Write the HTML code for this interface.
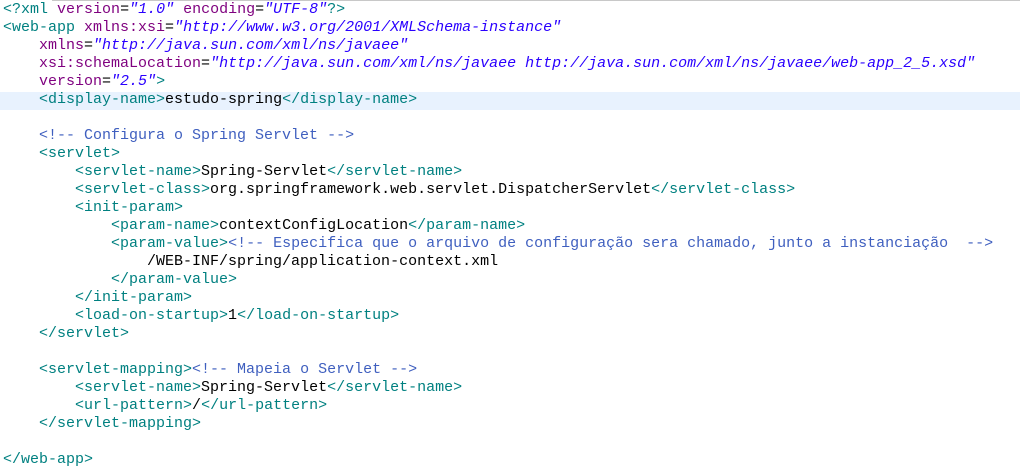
<!DOCTYPE html>
<html><head><meta charset="utf-8"><style>
body{margin:0;width:1020px;height:475px;background:#fff;overflow:hidden;position:relative}
.top{position:absolute;top:0;left:52px;right:0;height:1px;background:#c8c8c8}
.hl{position:absolute;left:0;right:0;top:92px;height:18px;background:#e8f2fe}
pre{position:absolute;top:1px;left:3px;margin:0;font-family:"Liberation Mono",monospace;font-size:15px;line-height:18px;color:#000}
.t{color:#008080}.a{color:#7f007f}.v{color:#2a00ff;font-style:italic}.c{color:#3f5fbf}
</style></head><body><div class="top"></div><div class="hl"></div><pre><span class="t">&lt;?</span><span class="t">xml</span> <span class="a">version</span>=<span class="v">"1.0"</span> <span class="a">encoding</span>=<span class="v">"UTF-8"</span><span class="t">?&gt;</span>
<span class="t">&lt;web-app</span> <span class="a">xmlns:xsi</span>=<span class="v">"http://www.w3.org/2001/XMLSchema-instance"</span>
    <span class="a">xmlns</span>=<span class="v">"http://java.sun.com/xml/ns/javaee"</span>
    <span class="a">xsi:schemaLocation</span>=<span class="v">"http://java.sun.com/xml/ns/javaee http://java.sun.com/xml/ns/javaee/web-app_2_5.xsd"</span>
    <span class="a">version</span>=<span class="v">"2.5"</span><span class="t">&gt;</span>
    <span class="t">&lt;display-name&gt;</span>estudo-spring<span class="t">&lt;/display-name&gt;</span>

    <span class="c">&lt;!-- Configura o Spring Servlet --&gt;</span>
    <span class="t">&lt;servlet&gt;</span>
        <span class="t">&lt;servlet-name&gt;</span>Spring-Servlet<span class="t">&lt;/servlet-name&gt;</span>
        <span class="t">&lt;servlet-class&gt;</span>org.springframework.web.servlet.DispatcherServlet<span class="t">&lt;/servlet-class&gt;</span>
        <span class="t">&lt;init-param&gt;</span>
            <span class="t">&lt;param-name&gt;</span>contextConfigLocation<span class="t">&lt;/param-name&gt;</span>
            <span class="t">&lt;param-value&gt;</span><span class="c">&lt;!-- Especifica que o arquivo de configuração sera chamado, junto a instanciação  --&gt;</span>
                /WEB-INF/spring/application-context.xml
            <span class="t">&lt;/param-value&gt;</span>
        <span class="t">&lt;/init-param&gt;</span>
        <span class="t">&lt;load-on-startup&gt;</span>1<span class="t">&lt;/load-on-startup&gt;</span>
    <span class="t">&lt;/servlet&gt;</span>

    <span class="t">&lt;servlet-mapping&gt;</span><span class="c">&lt;!-- Mapeia o Servlet --&gt;</span>
        <span class="t">&lt;servlet-name&gt;</span>Spring-Servlet<span class="t">&lt;/servlet-name&gt;</span>
        <span class="t">&lt;url-pattern&gt;</span>/<span class="t">&lt;/url-pattern&gt;</span>
    <span class="t">&lt;/servlet-mapping&gt;</span>

<span class="t">&lt;/web-app&gt;</span></pre></body></html>
